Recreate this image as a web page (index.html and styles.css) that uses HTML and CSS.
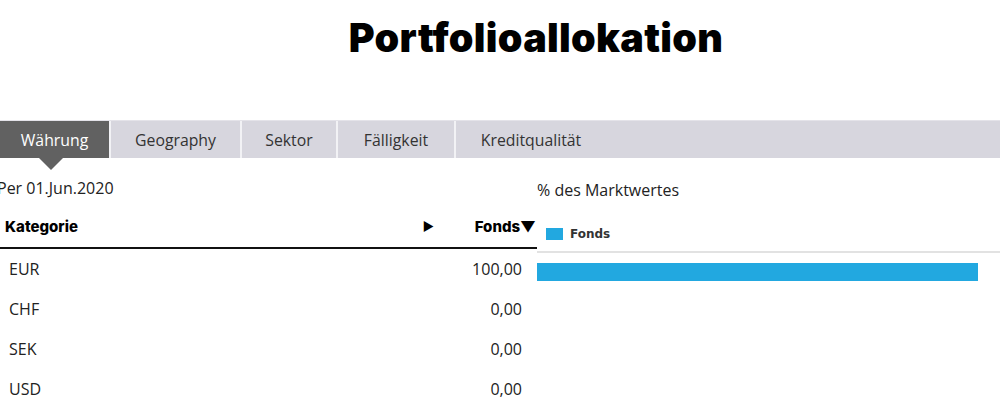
FILE: index.html
```html
<!DOCTYPE html>
<html lang="de">
<head>
<meta charset="utf-8">
<link rel="stylesheet" href="styles.css">
</head>
<body>
<h1 class="title">Portfolioallokation</h1>
<nav class="tabs">
  <div class="tab active">Währung</div>
  <div class="tab">Geography</div>
  <div class="tab">Sektor</div>
  <div class="tab">Fälligkeit</div>
  <div class="tab">Kreditqualität</div>
</nav>
<div class="content">
  <div class="left">
    <div class="date">Per 01.Jun.2020</div>
    <table class="table">
      <thead>
        <tr><th class="cat">Kategorie</th><th class="arrow">&#9654;</th><th class="fonds">Fonds&#9660;</th></tr>
      </thead>
      <tbody>
        <tr><td>EUR</td><td></td><td class="num">100,00</td></tr>
        <tr><td>CHF</td><td></td><td class="num">0,00</td></tr>
        <tr><td>SEK</td><td></td><td class="num">0,00</td></tr>
        <tr><td>USD</td><td></td><td class="num">0,00</td></tr>
      </tbody>
    </table>
  </div>
  <div class="right">
    <div class="caption">% des Marktwertes</div>
    <div class="legend"><span class="swatch"></span><span class="legend-label">Fonds</span></div>
    <div class="bars">
      <div class="bar" style="width: 441px"></div>
    </div>
  </div>
</div>
</body>
</html>
```

FILE: styles.css
```css
html, body {
  margin: 0;
  padding: 0;
  background: #fff;
  font-family: "Open Sans", "Noto Sans", sans-serif;
  color: #222;
}
.title {
  margin: 0;
  padding: 11px 0 0 72px;
  height: 107px;
  box-sizing: border-box;
  text-align: center;
  font-family: Inter, sans-serif;
  font-weight: 900;
  font-size: 39.5px;
  line-height: 54px;
  color: #000;
  letter-spacing: 0.3px;
}
.tabs {
  display: flex;
  height: 38px;
  background: #d7d6de;
  border-top: 1px solid #e4e3e9;
  box-sizing: border-box;
  margin-top: 13px;
}
.tab {
  position: relative;
  display: flex;
  align-items: center;
  justify-content: center;
  font-size: 15.8px;
  color: #333;
  border-right: 2px solid #f2f2f5;
  box-sizing: border-box;
}
.tab:nth-child(1) { width: 111px; }
.tab:nth-child(2) { width: 131px; }
.tab:nth-child(3) { width: 96px; }
.tab:nth-child(4) { width: 118px; }
.tab:nth-child(5) { width: 150px; border-right: none; }
.tab.active {
  background: #616161;
  color: #fff;
}
.tab.active::after {
  content: "";
  position: absolute;
  left: 39px;
  top: 100%;
  border-left: 12px solid transparent;
  border-right: 12px solid transparent;
  border-top: 12px solid #616161;
}
.content {
  display: flex;
}
.left {
  width: 537px;
  flex: none;
}
.date {
  font-size: 16px;
  margin: 20px 0 0 -3px;
  line-height: 20px;
}
.table {
  width: 537px;
  border-collapse: collapse;
  margin-top: 14px;
}
.table th {
  font-family: Inter, sans-serif;
  font-weight: 800;
  font-size: 15px;
  color: #000;
  height: 29px;
  padding: 0 0 6px;
  border-bottom: 2px solid #111;
  vertical-align: middle;
}
.table th.cat { text-align: left; padding-left: 5px; }
.table th.arrow { text-align: right; font-size: 12px; padding-right: 22px; }
.table th.fonds { text-align: right; width: 80px; padding-right: 1px; }
.table td {
  font-size: 16px;
  line-height: 20px;
  height: 40px;
  padding: 0 0 0 9px;
  vertical-align: middle;
  color: #222;
}
.table td.num { text-align: right; padding-right: 15px; }
.right {
  flex: 1;
}
.caption {
  font-size: 16px;
  line-height: 20px;
  margin-top: 22px;
}
.legend {
  display: flex;
  align-items: center;
  height: 34px;
  margin-top: 17px;
  padding-left: 9px;
  border-bottom: 2px solid #e2e2e2;
}
.swatch {
  width: 17px;
  height: 12px;
  background: #22a8e0;
  margin-right: 7px;
}
.legend-label {
  font-family: "DejaVu Sans", sans-serif;
  font-weight: bold;
  font-size: 12px;
  color: #333;
}
.bars {
  padding-top: 10px;
}
.bar {
  height: 18px;
  background: #22a8e0;
}
```
